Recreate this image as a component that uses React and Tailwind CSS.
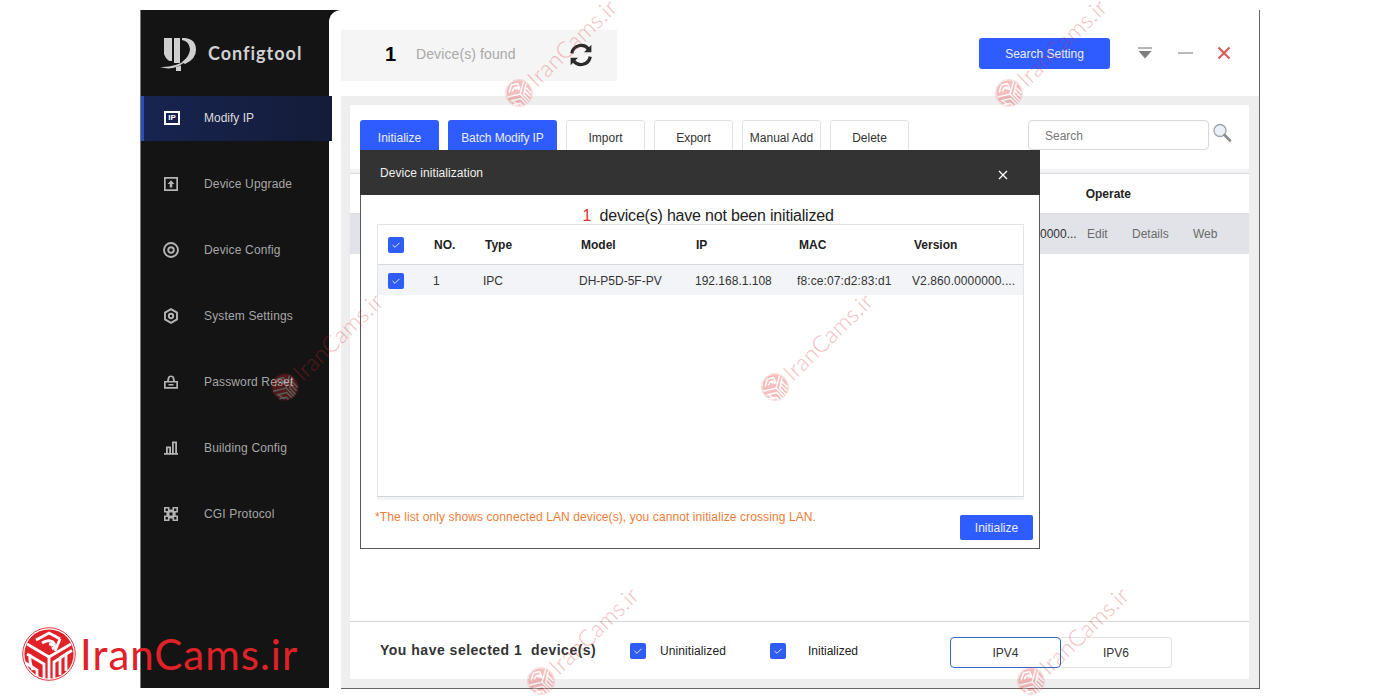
import React from "react";

const FONT = { fontFamily: '"Liberation Sans", Arial, sans-serif' };

function RedLogo({ size }) {
  return (
    <svg width={size} height={size} viewBox="0 0 54 54" className="shrink-0">
      <circle cx="27" cy="27" r="26.3" fill="none" stroke="currentColor" strokeWidth="0.9" />
      <circle cx="27" cy="27" r="24.6" fill="currentColor" />
      <g fill="none" stroke="#fff" strokeWidth="2.8">
        <path d="M27 30 V52" />
        <path d="M27 30 L5 17" />
        <path d="M27 30 L49 17" />
        <path d="M14 13 L27 6 Q33 9 38 12" />
        <path d="M20 16 Q26 12 31 15 Q35 19 30 22" />
        <path d="M27 17 Q30 17 31 19" />
        <path d="M38 12 L33 24" />
        <path d="M5 27 L22 37 V51" />
        <path d="M3.5 36 L15 43 V49" />
        <path d="M8 27 Q7 36 11 43" />
        <path d="M32 51 V35 L38 31 V48" />
        <path d="M38 31 L44 27 V44" />
        <path d="M44 27 L50 23.5" />
      </g>
    </svg>
  );
}

function Watermark({ x, y }) {
  return (
    <div
      className="absolute flex items-center gap-[2px] text-[#e02b2b] opacity-30 origin-[14px_14px] rotate-[-44deg] pointer-events-none"
      style={{ left: x - 14, top: y - 14 }}
    >
      <RedLogo size={28} />
      <span className="text-[23px] tracking-[0.3px] leading-[28px] font-light whitespace-nowrap" style={{ fontFamily: "Lato, sans-serif" }}>
        IranCams.ir
      </span>
    </div>
  );
}

function Check() {
  return (
    <span className="flex w-4 h-4 shrink-0 items-center justify-center rounded-[2px] bg-[#2f5cf5]">
      <svg width="10" height="8" viewBox="0 0 10 8" fill="none" stroke="#dfe6ff" strokeWidth="1">
        <path d="M1.5 4 L4 6.3 L8.5 1.8" />
      </svg>
    </span>
  );
}

const ico = "w-4 h-4 text-[#b4b4b4]";
function MenuIcon({ kind }) {
  if (kind === "ip")
    return (
      <span className="flex w-[16px] h-[14px] items-center justify-center border-2 border-white text-white text-[8px] leading-none font-bold">
        IP
      </span>
    );
  return (
    <svg viewBox="0 0 16 16" className={ico} fill="currentColor">
      {kind === "up" && (
        <path fillRule="evenodd" d="M1 1 H15 V15 H1 Z M2.7 2.7 V13.3 H13.3 V2.7 Z M8 4.2 L11.4 8 H9.3 V11.6 H6.7 V8 H4.6 Z" />
      )}
      {kind === "cfg" && (
        <g fill="none" stroke="currentColor">
          <circle cx="8" cy="8" r="7" strokeWidth="1.9" />
          <circle cx="8" cy="8" r="2.8" strokeWidth="1.9" />
        </g>
      )}
      {kind === "sys" && (
        <g fill="none" stroke="currentColor" strokeWidth="1.9">
          <path d="M8 1.2 L14 4.6 V11.4 L8 14.8 L2 11.4 V4.6 Z" />
          <circle cx="8" cy="8" r="2.2" />
        </g>
      )}
      {kind === "pwd" && (
        <path fillRule="evenodd" d="M1 7 L4 7 L4.8 3.6 Q5.2 1.4 8 1.4 Q10.8 1.4 11.2 3.6 L12 7 H15 V14.8 H1 Z M5.9 7 H10.1 L9.5 4 Q9.2 3 8 3 Q6.8 3 6.5 4 Z M2.7 8.6 V13.1 H13.3 V8.6 Z M5.5 10 H10.5 V11.6 H5.5 Z" />
      )}
      {kind === "bld" && (
        <path fillRule="evenodd" d="M1 13 H3 V6.5 H8 V13 H9 V1.4 H14 V13 H15 V14.8 H1 Z M4.8 8.2 V13 H6.2 V8.2 Z M10.8 3.2 V13 H12.2 V3.2 Z" />
      )}
      {kind === "cgi" && (
        <path fillRule="evenodd" d="M1 1 H6.5 V3.4 H9.5 V1 H15 V6.5 H12.6 V9.5 H15 V15 H9.5 V12.6 H6.5 V15 H1 V9.5 H3.4 V6.5 H1 Z M2.6 2.6 V4.9 H4.9 V2.6 Z M11.1 2.6 V4.9 H13.4 V2.6 Z M2.6 11.1 V13.4 H4.9 V11.1 Z M11.1 11.1 V13.4 H13.4 V11.1 Z M6.5 6.5 V9.5 H9.5 V6.5 Z" />
      )}
    </svg>
  );
}

const menu = [
  ["up", "Device Upgrade"],
  ["cfg", "Device Config"],
  ["sys", "System Settings"],
  ["pwd", "Password Reset"],
  ["bld", "Building Config"],
  ["cgi", "CGI Protocol"],
];

function Sidebar() {
  return (
    <aside className="w-[188px] h-full shrink-0 bg-[#141414] flex flex-col">
      <div className="h-[86px] flex items-center pl-[19px] pt-[1px]">
        <svg width="38" height="36" viewBox="0 0 38 36" className="shrink-0">
          <path d="M4 2 H12 V25 Q7 26 4 18 Z" fill="#cfcfcf" />
          <path d="M14 2 H20 V27 H14 Z" fill="#cfcfcf" />
          <path d="M22 2 H25 Q36 3 36 14 Q36 23 25 28 L22 26 Q30 20 30 13 Q29 5 22 4 Z" fill="#cfcfcf" />
          <path d="M0 31 Q14 32 28 23 Q16 36 0 31 Z" fill="#cfcfcf" />
          <path d="M16 31 L21 29.5 V35 H16 Z" fill="#cfcfcf" />
        </svg>
        <span className="ml-[10px] text-[18px] font-bold tracking-[1px] text-[#d0d0d0]" style={{ fontFamily: "Lato, sans-serif" }}>
          Configtool
        </span>
      </div>
      <div className="h-[45px] w-[191px] relative z-10 flex items-center border-l-[3px] border-[#2a4fb8] bg-gradient-to-r from-[#182450] to-[#141c38] pl-[20px] pb-[2px]">
        <MenuIcon kind="ip" />
        <span className="ml-[24px] text-xs text-[#dcdcdc]">Modify IP</span>
      </div>
      <div className="flex flex-col gap-[30px] pt-[25px] pl-[22px]">
        {menu.map(([k, t]) => (
          <div key={k} className="h-9 flex items-center">
            <MenuIcon kind={k} />
            <span className="ml-[25px] text-xs tracking-[0.15px] text-[#a6a6a6]">{t}</span>
          </div>
        ))}
      </div>
    </aside>
  );
}

function ToolBtn({ w, primary, children }) {
  return (
    <div
      className={
        "h-[40px] flex items-start justify-center text-xs rounded-t-[3px] " +
        (primary ? "pt-[10px] bg-[#2f5cff] text-[#e8edff]" : "pt-[9px] bg-white border border-[#e2e2e2] text-[#333]")
      }
      style={{ width: w }}
    >
      {children}
    </div>
  );
}

function Main() {
  return (
    <div className="flex-1 bg-[#eeeeee] p-[9px] pr-[10px] ml-[12px] min-h-0">
      <div className="h-full bg-white flex flex-col">
        <div className="h-[64px] shrink-0 pl-[10px] pt-[15px] flex gap-[9px] items-start relative">
          <ToolBtn w={79} primary>Initialize</ToolBtn>
          <ToolBtn w={109} primary><span className="tracking-[-0.1px]">Batch Modify IP</span></ToolBtn>
          <ToolBtn w={79}>Import</ToolBtn>
          <ToolBtn w={79}>Export</ToolBtn>
          <ToolBtn w={79}>Manual Add</ToolBtn>
          <ToolBtn w={79}>Delete</ToolBtn>
          <div className="ml-[110px] w-[181px] h-[30px] border border-[#dadada] rounded-[4px] pl-4 pt-[1px] flex items-center text-xs text-[#777]">
            Search
          </div>
          <svg width="20" height="20" viewBox="0 0 20 20" className="-ml-[6px] mt-[3px]">
            <circle cx="8" cy="7.5" r="6" fill="#eaf0f6" stroke="#9aa4ae" strokeWidth="1.3" />
            <path d="M12.5 12 L18 17.5" stroke="#8b8b8b" strokeWidth="2.6" strokeLinecap="round" />
          </svg>
        </div>
        <div className="h-[5px] shrink-0 bg-[#f2f2f6] border-b border-[#d8d8d8]" />
        <div className="h-[40px] shrink-0 flex items-center justify-end text-xs font-bold text-[#222] pr-[118px] border-b border-[#dcdcdc]">
          Operate
        </div>
        <div className="h-[40px] shrink-0 bg-[#e2e3e8] flex items-center text-xs text-[#6b6b6b] pl-[690px]">
          <span className="w-[47px] text-[#333] text-right pr-[12px] whitespace-nowrap">0000...</span>
          <span className="w-[45px]">Edit</span>
          <span className="w-[61px]">Details</span>
          <span>Web</span>
        </div>
        <div className="flex-1" />
        <div className="h-[58px] shrink-0 border-t border-[#d4d4d4] flex items-center pl-[30px] text-xs text-[#222]">
          <span className="w-[250px] text-sm font-bold tracking-[0.5px] text-[#333] whitespace-pre -mt-[2px]">You have selected 1  device(s)</span>
          <Check />
          <span className="ml-[14px] w-[110px] tracking-[0.1px]">Uninitialized</span>
          <Check />
          <span className="ml-[22px] w-[142px]">Initialized</span>
          <div className="flex mt-[4px] text-[#333]">
            <div className="w-[111px] h-[31px] flex items-center justify-center border border-[#3567c8] rounded-[4px] pt-[1px]">IPV4</div>
            <div className="w-[111px] h-[31px] flex items-center justify-center border border-[#e2e2e2] border-l-0 rounded-r-[4px] pt-[1px]">IPV6</div>
          </div>
        </div>
      </div>
    </div>
  );
}

function Header() {
  return (
    <div className="h-[86px] shrink-0 flex pl-[12px] pt-[20px] items-start">
      <div className="w-[276px] h-[51px] bg-[#f5f5f5] flex items-center pl-[44px] pb-[3px]">
        <span className="w-[31px] text-[20px] font-bold text-black">1</span>
        <span className="w-[152px] text-sm tracking-[0.1px] text-[#a8a8a8]">Device(s) found</span>
        <svg width="26" height="26" viewBox="0 0 24 24" fill="none" stroke="#2b2b2b" strokeWidth="3" className="mt-[2px]">
          <path d="M3.5 10.5 A8.7 8.7 0 0 1 19 6.6" />
          <path d="M20.5 13.5 A8.7 8.7 0 0 1 5 17.4" />
          <path d="M21.6 2.6 V9.4 H14.8 Z" fill="#2b2b2b" stroke="none" />
          <path d="M2.4 21.4 V14.6 H9.2 Z" fill="#2b2b2b" stroke="none" />
        </svg>
      </div>
      <div className="ml-[362px] mt-[8px] w-[131px] h-[31px] rounded-[3px] bg-[#2f5cff] text-xs text-[#e8edff] flex items-center justify-center">
        Search Setting
      </div>
      <div className="mt-[16px] flex items-center">
        <svg width="16" height="14" viewBox="0 0 16 14" className="ml-[27px]">
          <path d="M1 1 H15 V3 H1 Z" fill="#b5b5b5" />
          <path d="M1.5 5 H14.5 L8 12.5 Z" fill="#7d7d7d" />
        </svg>
        <span className="ml-[25px] w-[15px] h-[2px] bg-[#b9b9b9]" />
        <svg width="14" height="14" viewBox="0 0 14 14" className="ml-[24px]" stroke="#dc5a5a" strokeWidth="2.2">
          <path d="M1.5 1.5 L12.5 12.5 M12.5 1.5 L1.5 12.5" />
        </svg>
      </div>
    </div>
  );
}

const cols = "grid grid-cols-[56px_50px_96px_116px_102px_115px_1fr] items-center";

function Modal() {
  return (
    <div className="absolute left-[360px] top-[150px] w-[680px] h-[399px] bg-white border border-[#5a5a5a] border-t-0 flex flex-col">
      <div className="h-[45px] shrink-0 -mx-px bg-[#333333] flex items-center justify-between pl-[20px] pr-[32px] text-xs text-[#f0f0f0]">
        <span className="tracking-[0.05px]">Device initialization</span>
        <svg width="10" height="10" viewBox="0 0 10 10" stroke="#fff" strokeWidth="1.3" className="mt-[5px]">
          <path d="M1 1 L9 9 M9 1 L1 9" />
        </svg>
      </div>
      <div className="h-[29px] shrink-0 flex items-start justify-center pt-[12px] text-base leading-[18px] tracking-[-0.2px] text-[#222] whitespace-pre ml-[16px]">
        <span className="text-[#d8342c]">1</span>
        <span>{"  device(s) have not been initialized"}</span>
      </div>
      <div className="mx-[16px] w-[647px] h-[276px] shrink-0 bg-[#f3f4f8] pb-[3px]">
        <div className="h-full bg-white border border-[#e4e4e4] border-b-[#d4d6de] flex flex-col text-xs">
          <div className={cols + " h-[40px] shrink-0 font-bold text-[#222] border-b border-[#d8d8d8]"}>
            <span className="pl-[10px]"><Check /></span>
            <span>NO.</span>
            <span className="pl-[1px]">Type</span>
            <span className="pl-[1px]">Model</span>
            <span>IP</span>
            <span className="pl-[1px]">MAC</span>
            <span className="pl-[1px]">Version</span>
          </div>
          <div className={cols + " h-[30px] shrink-0 bg-[#f3f4f8] text-[#333] pt-[1px]"}>
            <span className="pl-[10px]"><Check /></span>
            <span className="-ml-[1px]">1</span>
            <span className="-ml-[1px]">IPC</span>
            <span className="-ml-[1px]">DH-P5D-5F-PV</span>
            <span className="-ml-[1px]">192.168.1.108</span>
            <span className="-ml-[1px] tracking-[0.1px]">f8:ce:07:d2:83:d1</span>
            <span className="-ml-[1px] tracking-[0.1px]">V2.860.0000000....</span>
          </div>
        </div>
      </div>
      <div className="flex-1 flex items-start justify-between pl-[14px] pr-[6px]">
        <span className="mt-[9px] text-xs tracking-[0.1px] text-[#ee7d36]">*The list only shows connected LAN device(s), you cannot initialize crossing LAN.</span>
        <div className="mt-[15px] w-[73px] h-[25px] rounded-[2px] bg-[#2f5cff] text-xs text-[#e8edff] flex items-center justify-center">
          Initialize
        </div>
      </div>
    </div>
  );
}

export default function App() {
  return (
    <div className="relative w-[1400px] h-[700px] overflow-hidden bg-white" style={FONT}>
      <div className="ml-[140px] mt-[10px] w-[1120px] h-[678px] flex border-l border-[#777] bg-[#141414] absolute top-0 left-0">
        <Sidebar />
        <div className="flex-1 min-w-0 flex flex-col bg-white rounded-tl-[12px] border-r border-[#666]">
          <Header />
          <Main />
        </div>
      </div>
      <div className="absolute left-[341px] top-[688px] w-[919px] h-px bg-[#666]" />
      <Modal />
      <Watermark x={519} y={93} />
      <Watermark x={1009} y={93} />
      <Watermark x={285} y={387} />
      <Watermark x={775} y={387} />
      <Watermark x={541} y={681} />
      <Watermark x={1031} y={681} />
      <div className="absolute left-[22px] top-[627px] flex items-center text-[#e02228]">
        <RedLogo size={54} />
        <span className="ml-[4px] text-[42px] tracking-[1px] leading-[54px] whitespace-nowrap" style={{ fontFamily: "Lato, sans-serif" }}>IranCams.ir</span>
      </div>
    </div>
  );
}
